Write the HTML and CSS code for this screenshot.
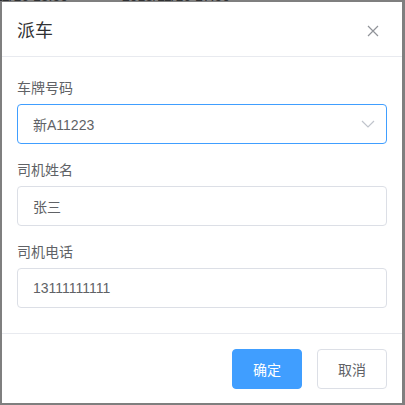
FILE: index.html
```html
<!DOCTYPE html>
<html lang="zh">
<head>
<meta charset="utf-8">
<link rel="stylesheet" href="styles.css">
</head>
<body>
<div class="page">
  <div class="bg-row"><span class="bg-a">2018/11/16 13:50</span><span class="bg-b">2018/11/16 17:50</span></div>
</div>
<div class="mask">
  <div class="dialog">
    <div class="dialog-header">
      <span class="dialog-title">派车</span>
      <svg class="close" width="12" height="12" viewBox="0 0 12 12"><path d="M1 1L11 11M11 1L1 11" stroke="#909399" stroke-width="1.2" fill="none"/></svg>
    </div>
    <div class="dialog-body">
      <div class="form-item">
        <div class="label">车牌号码</div>
        <div class="input focus">
          <span>新A11223</span>
          <svg class="chev" width="14" height="8" viewBox="0 0 14 8"><path d="M1 1L7 7L13 1" stroke="#c0c4cc" stroke-width="1.2" fill="none"/></svg>
        </div>
      </div>
      <div class="form-item">
        <div class="label">司机姓名</div>
        <div class="input"><span>张三</span></div>
      </div>
      <div class="form-item">
        <div class="label">司机电话</div>
        <div class="input"><span>13111111111</span></div>
      </div>
    </div>
    <div class="dialog-footer">
      <button class="btn primary">确定</button>
      <button class="btn">取消</button>
    </div>
  </div>
</div>
</body>
</html>
```
FILE: styles.css
```css
* { box-sizing: border-box; }
html, body { margin: 0; padding: 0; }
body {
  width: 405px;
  height: 405px;
  overflow: hidden;
  font-family: "Liberation Sans", "Noto Sans CJK SC", sans-serif;
  background: #fff;
  position: relative;
}
.page { height: 405px; }
.bg-row {
  position: relative;
  top: -11px;
  height: 14px;
  font-size: 14px;
  line-height: 14px;
  color: #606266;
}
.bg-a { position: absolute; left: -40px; }
.bg-b { position: absolute; left: 122px; }
.mask {
  position: absolute;
  inset: 0;
  background: rgba(0, 0, 0, 0.5);
  padding: 2px;
}
.dialog {
  width: 400px;
  height: 401px;
  background: #fff;
  display: flex;
  flex-direction: column;
}
.dialog-header {
  height: 55px;
  padding: 0 15px;
  border-bottom: 1px solid #e8eaef;
  display: flex;
  align-items: center;
  justify-content: space-between;
}
.dialog-title {
  font-size: 18px;
  line-height: 24px;
  color: #303133;
  padding-top: 4px;
}
.close { margin-right: 8px; margin-top: 3px; }
.dialog-body {
  padding: 21px 15px 25px;
  display: flex;
  flex-direction: column;
  gap: 16px;
  border-bottom: 1px solid #e8eaef;
}
.label {
  font-size: 14px;
  line-height: 20px;
  color: #606266;
  margin-bottom: 6px;
}
.input {
  height: 40px;
  border: 1px solid #dcdfe6;
  border-radius: 4px;
  padding: 0 15px;
  display: flex;
  align-items: center;
  justify-content: space-between;
  font-size: 14px;
  color: #606266;
}
.input.focus { border-color: #409eff; }
.chev { margin-right: -4px; }
.dialog-footer {
  padding: 15px 15px 0;
  display: flex;
  justify-content: flex-end;
  gap: 15px;
}
.btn {
  width: 70px;
  height: 40px;
  border: 1px solid #dcdfe6;
  border-radius: 4px;
  background: #fff;
  color: #606266;
  font-family: "Liberation Sans", "Noto Sans CJK SC", sans-serif;
  font-size: 14px;
  padding: 0;
}
.btn.primary {
  background: #409eff;
  border-color: #409eff;
  color: #fff;
}
```
